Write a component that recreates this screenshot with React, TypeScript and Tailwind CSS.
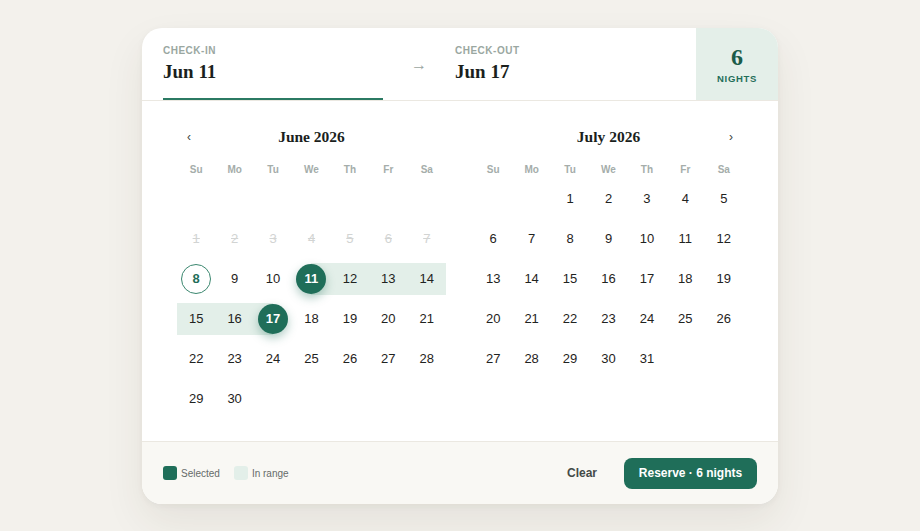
const serif = { fontFamily: '"Liberation Serif", "Times New Roman", serif' }

type Month = 'jun' | 'jul'

const weekdays = ['Su', 'Mo', 'Tu', 'We', 'Th', 'Fr', 'Sa']

const june: Array<number | null> = [
  ...Array(7).fill(null),
  ...Array.from({ length: 30 }, (_, i) => i + 1),
]
const july: Array<number | null> = [
  null,
  null,
  ...Array.from({ length: 31 }, (_, i) => i + 1),
]

const DayCell = ({ day, month }: { day: number | null; month: Month }) => {
  if (!day) return <div className="h-10" />

  const jun = month === 'jun'
  const disabled = jun && day < 8
  const isStart = jun && day === 11
  const isEnd = jun && day === 17
  const inRange = jun && day > 11 && day < 17
  const today = jun && day === 8

  return (
    <div className="relative flex h-10 items-center justify-center">
      {inRange && <div className="absolute inset-x-0 inset-y-1 bg-[#e3efe9]" />}
      {isStart && <div className="absolute inset-y-1 left-1/2 right-0 bg-[#e3efe9]" />}
      {isEnd && <div className="absolute inset-y-1 left-0 right-1/2 bg-[#e3efe9]" />}
      {isStart || isEnd ? (
        <span className="relative z-10 flex h-[30px] w-[30px] items-center justify-center rounded-full bg-[#1f6e59] text-[13px] font-bold text-white shadow-[0_4px_10px_rgba(31,110,89,0.35)]">
          {day}
        </span>
      ) : today ? (
        <span className="relative flex h-[30px] w-[30px] items-center justify-center rounded-full border border-[#3b876f] text-[13px] font-bold text-[#1f6e59]">
          {day}
        </span>
      ) : disabled ? (
        <span className="relative text-[13px] text-[#d2d4d3] line-through">{day}</span>
      ) : (
        <span className="relative text-[13px] text-[#1f2321]">{day}</span>
      )}
    </div>
  )
}

const MonthPanel = ({
  title,
  days,
  month,
  nav,
}: {
  title: string
  days: Array<number | null>
  month: Month
  nav: 'prev' | 'next'
}) => (
  <div className="w-[269px]">
    <div className="flex h-7 items-center justify-between px-[10px]">
      <span className={`w-3 text-[12px] text-[#3a3f3d] ${nav === 'prev' ? '' : 'invisible'}`}>‹</span>
      <h2 className="text-[15.5px] font-bold text-[#1b1f1d]" style={serif}>
        {title}
      </h2>
      <span className={`w-3 text-right text-[12px] text-[#3a3f3d] ${nav === 'next' ? '' : 'invisible'}`}>›</span>
    </div>
    <div className="mt-2 grid h-5 grid-cols-7 items-center">
      {weekdays.map((w) => (
        <span key={w} className="text-center text-[10px] font-semibold text-[#a5adaa]">
          {w}
        </span>
      ))}
    </div>
    <div className="grid grid-cols-7">
      {days.map((d, i) => (
        <DayCell key={i} day={d} month={month} />
      ))}
    </div>
  </div>
)

export default function App() {
  return (
    <div
      className="flex min-h-[531px] w-full items-start justify-center bg-[#f3f1ec] pt-[28px]"
      style={{ fontFamily: '"Liberation Sans", Arial, sans-serif' }}
    >
      <div className="w-[636px] overflow-hidden rounded-[20px] bg-white shadow-[0_18px_40px_rgba(60,50,30,0.08),0_2px_6px_rgba(60,50,30,0.05)]">
        {/* header */}
        <div className="flex h-[73px] border-b border-[#ebe8e1]">
          <div className="flex w-[262px] flex-col px-[21px] pt-[17px]">
            <span className="text-[10px] font-bold leading-3 tracking-[0.05em] text-[#9aa7a1]">CHECK-IN</span>
            <span className="mt-[3px] text-[19px] font-bold leading-6 text-[#1b1f1d]" style={serif}>
              Jun 11
            </span>
            <div className="mt-auto h-[2px] bg-[#2b7a63]" />
          </div>
          <div className="flex w-[30px] items-center justify-center pt-[1px] text-[16px] text-[#9aa5a0]">→</div>
          <div className="flex w-[262px] flex-col px-[21px] pt-[17px]">
            <span className="text-[10px] font-bold leading-3 tracking-[0.05em] text-[#9aa7a1]">CHECK-OUT</span>
            <span className="mt-[3px] text-[19px] font-bold leading-6 text-[#1b1f1d]" style={serif}>
              Jun 17
            </span>
          </div>
          <div className="flex flex-1 flex-col items-center justify-center bg-[#e4efe9] pt-[2px]">
            <span className="text-[24px] font-bold leading-7 text-[#1b5c49]" style={serif}>
              6
            </span>
            <span className="mt-[1px] text-[9.5px] font-bold tracking-[0.07em] text-[#1f6e59]">NIGHTS</span>
          </div>
        </div>

        {/* calendars */}
        <div className="flex py-[22px]">
          <div className="pl-[35px] pr-[14px]">
            <MonthPanel title="June 2026" days={june} month="jun" nav="prev" />
          </div>
          <div className="w-px bg-[#efece6]" />
          <div className="pl-[14px] pr-[35px]">
            <MonthPanel title="July 2026" days={july} month="jul" nav="next" />
          </div>
        </div>

        {/* footer */}
        <div className="flex h-[63px] items-center border-t border-[#ebe8e1] bg-[#f9f8f4] px-[21px]">
          <div className="flex items-center text-[10px] text-[#666b69]">
            <span className="h-[14px] w-[14px] rounded-[3px] bg-[#1f6e59]" />
            <span className="ml-[4px]">Selected</span>
            <span className="ml-[14px] h-[14px] w-[14px] rounded-[3px] bg-[#e3efe9]" />
            <span className="ml-[4px]">In range</span>
          </div>
          <div className="ml-auto flex items-center">
            <button className="text-[12px] font-bold text-[#444a47]">Clear</button>
            <button className="ml-[27px] h-[31px] w-[133px] rounded-[8px] bg-[#1f6e59] text-[12px] font-bold text-white">
              Reserve · 6 nights
            </button>
          </div>
        </div>
      </div>
    </div>
  )
}
